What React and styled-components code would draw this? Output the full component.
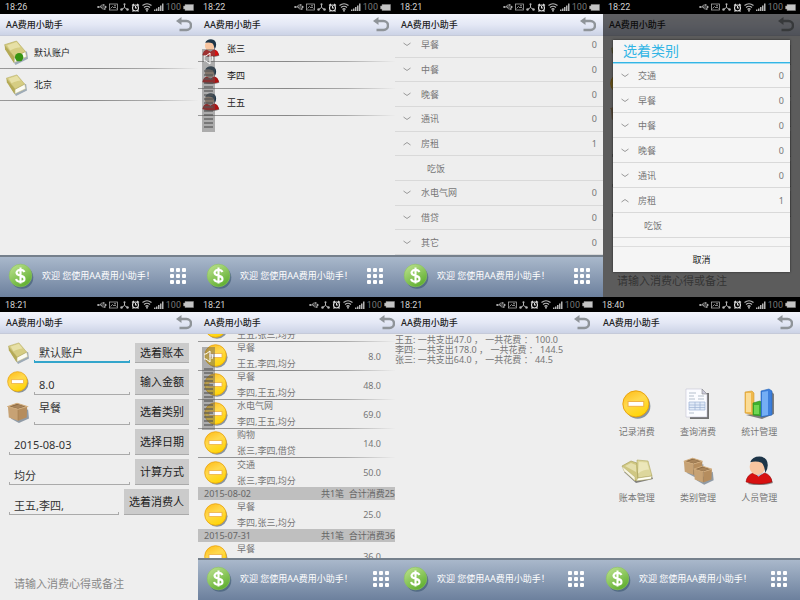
import React from "react";
import styled, { createGlobalStyle, css } from "styled-components";

const Global = createGlobalStyle`
  * { box-sizing: border-box; }
  body { margin: 0; background: #eee; font-family: "Noto Sans", "Noto Sans CJK SC", sans-serif; font-size: 9px; color: #777; }
  button, input { font: inherit; color: inherit; border: 0; margin: 0; padding: 0; background: none; border-radius: 0; }
  button { cursor: pointer; }
  ul { list-style: none; margin: 0; padding: 0; }
  h1, h2, p { margin: 0; font: inherit; }
  svg { display: block; flex: none; }
`;

/* ---------- page ---------- */
const Gallery = styled.main`
  display: grid;
  grid-template-rows: 297fr 303fr;
  height: 100vh;
  min-height: 600px;
`;
const GalleryRow = styled.div`
  display: grid;
  grid-template-columns: ${(p) => p.$columns};
  min-height: 0;
`;
const Phone = styled.section`
  display: flex;
  flex-direction: column;
  min-width: 0;
  min-height: 0;
  overflow: hidden;
  background: #eee;
`;
const Screen = styled.div`
  position: relative;
  display: flex;
  flex-direction: column;
  flex: 1;
  min-height: 0;
`;
const Body = styled.div`
  display: flex;
  flex-direction: column;
  flex: 1;
  min-height: 0;
  overflow: hidden;
`;

/* ---------- bars ---------- */
const StatusRow = styled.div`
  display: flex;
  align-items: center;
  flex: none;
  height: ${(p) => (p.$tall ? 15 : 14)}px;
  padding: 0 ${(p) => p.$right}px 0 5px;
  background: #000;
  color: #d0d0d0;
  font-family: Roboto, sans-serif;
  font-size: 9px;
  line-height: 14px;
`;
const StatusIcons = styled.div`
  display: flex;
  align-items: center;
  gap: 2px;
  margin-left: auto;
  color: #b4b4b4;
`;
const Charge = styled.span`
  color: #777;
  font-size: 9px;
`;
const TitleRow = styled.header`
  display: flex;
  align-items: center;
  justify-content: space-between;
  flex: none;
  height: 22px;
  padding: 0 ${(p) => p.$right}px 0 6px;
  border-bottom: 1px solid #c5cad9;
  background: linear-gradient(#f3f5fc, #e4e8f5 50%, #ccd3e6);
  color: #222;
  font-weight: 500;
`;
const BackButton = styled.button`
  color: #8f9499;
`;
const FooterRow = styled.footer`
  display: flex;
  align-items: center;
  flex: none;
  height: 42px;
  padding: 0 ${(p) => p.$right}px 3px 8px;
  border-top: 2px solid #75808c;
  background: linear-gradient(#a9b8cb, #6c809d);
  color: #fff;
`;
const Welcome = styled.p`
  flex: 1;
  padding-left: 8px;
  white-space: nowrap;
`;

/* ---------- simple lists ---------- */
const fade = css`
  border-bottom: 1px solid;
  border-image: linear-gradient(90deg, #999, #888 45%, #aaa 75%, #eee) 1;
`;
const PlainList = styled.ul`
  margin-top: ${(p) => (p.$scrolled ? -1 : 1)}px;
`;
const PlainItem = styled.li`
  display: flex;
  align-items: center;
  gap: ${(p) => (p.$small ? 7 : 6)}px;
  height: ${(p) => (p.$small ? 27 : 32)}px;
  padding-left: ${(p) => (p.$small ? 4 : 3)}px;
  color: #222;
  ${fade}
`;
const IconSlot = styled.span`
  display: flex;
  align-items: center;
  justify-content: center;
  width: ${(p) => p.$size}px;
  height: ${(p) => p.$size}px;
`;

/* ---------- categories ---------- */
const CategoryList = styled.ul`
  display: flex;
  flex-direction: column;
  flex: 1;
  min-height: 0;
  margin-top: ${(p) => (p.$scrolled ? -3 : 0)}px;
`;
const CategoryItem = styled.li`
  display: flex;
  flex: 1;
  border-bottom: 1px solid #d9d9d9;
`;
const CategoryButton = styled.button`
  display: flex;
  align-items: center;
  flex: 1;
  padding: 0 6px 0 ${(p) => (p.$child ? (p.$dialog ? 31 : 32) : 8)}px;
  text-align: left;
`;
const CategoryName = styled.span`
  flex: 1;
  padding-left: ${(p) => (p.$child ? 0 : p.$dialog ? 9 : 10)}px;
`;

/* ---------- dialog ---------- */
const Scrim = styled.div`
  position: absolute;
  inset: 0;
  display: flex;
  padding: 26px 10px 25px;
  background: rgba(0, 0, 0, 0.61);
`;
const Dialog = styled.div`
  display: flex;
  flex-direction: column;
  flex: 1;
  background: #f5f5f5;
  box-shadow: 0 0 2px #222;
`;
const DialogTitle = styled.h2`
  padding-left: 10px;
  border-bottom: 1px solid #33b5e5;
  box-shadow: 0 1px 0 #9fdcf2;
  color: #33b5e5;
  font-size: 14px;
  line-height: 22px;
`;
const DialogButton = styled.button`
  height: 26px;
  margin-top: 8px;
  border-top: 1px solid #ddd;
  color: #222;
`;

/* ---------- expense form ---------- */
const Form = styled.form`
  display: flex;
  flex-direction: column;
  gap: 4px;
  flex: 1;
  padding: 9px 9px 7px 7px;
  color: #333;
  font-size: 11px;
`;
const FormRow = styled.div`
  display: flex;
  gap: 5px;
  height: ${(p) => (p.$first ? 20 : 26)}px;
  margin-bottom: ${(p) => (p.$first ? 2 : 0)}px;
  svg { align-self: center; }
`;
const fieldPadding = { top: "0 5px 2px", raised: "0 5px 10px", low: "5px 5px 0" };
const Field = styled.input`
  flex: 1;
  min-width: 0;
  margin-left: ${(p) => (p.$wide ? 2 : 0)}px;
  padding: ${(p) => fieldPadding[p.$place]};
  outline: 0;
  --line: ${(p) => (p.$active ? "#33a5cb" : "#aaa")};
  background:
    linear-gradient(var(--line), var(--line)) bottom / 100% ${(p) => (p.$active ? 2 : 1)}px no-repeat,
    linear-gradient(var(--line), var(--line)) left bottom / 1px 3px no-repeat,
    linear-gradient(var(--line), var(--line)) right bottom / 1px 3px no-repeat;
`;
const PickButton = styled.button`
  padding: 0 5px;
  border-bottom: 1px solid #aaa;
  background: #cbcbcb;
  color: #222;
  line-height: 18px;
  white-space: nowrap;
`;
const Note = styled.input`
  margin-top: auto;
  padding-left: 7px;
  line-height: 18px;
  &::placeholder { color: #888; opacity: 1; }
`;

/* ---------- expense records ---------- */
const Records = styled.ul`
  margin-top: -21px;
`;
const Record = styled.li`
  display: flex;
  align-items: center;
  height: 29px;
  padding: 0 14px 0 6px;
  ${(p) => !p.$last && fade}
`;
const RecordText = styled.div`
  display: flex;
  flex-direction: column;
  flex: 1;
  gap: 4px;
  padding-left: 9px;
  line-height: 12px;
  white-space: nowrap;
`;
const DayBand = styled.li`
  display: flex;
  justify-content: space-between;
  height: 13px;
  padding-left: 6px;
  background: #bfbfbf;
  color: #666;
  line-height: 13px;
  white-space: pre;
`;

/* ---------- summary and home ---------- */
const Summary = styled.p`
  padding-top: 1px;
  line-height: 10px;
  white-space: pre;
`;
const HomeGrid = styled.nav`
  display: grid;
  grid-template-columns: repeat(3, 1fr);
  row-gap: 14px;
  padding: 54px 10px 0 9px;
`;
const HomeButton = styled.button`
  display: flex;
  flex-direction: column;
  align-items: center;
  gap: 3px;
  line-height: 17px;
`;

/* ---------- volume indicator ---------- */
const VolumeBox = styled.div`
  position: absolute;
  left: 4px;
  top: 35px;
  padding: 3px 2px;
  background: rgba(90, 90, 90, 0.45);
`;

/* ---------- drawings ---------- */
const Usb = () => (
  <svg width="10" height="8" viewBox="0 0 20 16" fill="none" stroke="currentColor" strokeWidth="1.6">
    <path d="M3 8h14M6 8l3-4h3M8 8l3 4h3" />
    <path d="M16 5l4 3-4 3z" fill="currentColor" stroke="none" />
    <circle cx="2.5" cy="8" r="2.2" fill="currentColor" stroke="none" />
    <path d="M12 2.5h3v3h-3zM14 10.5h3v3h-3z" fill="currentColor" stroke="none" />
  </svg>
);
const Pic = () => (
  <svg width="9" height="8" viewBox="0 0 18 16" fill="none" stroke="currentColor" strokeWidth="1.5">
    <rect x="1" y="2" width="16" height="12" />
    <path d="M3 11l4-4 3 3 2-2 3 3" />
    <circle cx="12" cy="5.5" r="1" />
  </svg>
);
const Net = () => (
  <svg width="9" height="8" viewBox="0 0 18 16" fill="none" stroke="currentColor" strokeWidth="2">
    <path d="M9 2v7l-6 4M9 9l6 4" />
    <circle cx="9" cy="2.5" r="2" fill="currentColor" stroke="none" />
    <circle cx="3" cy="13" r="2.5" fill="currentColor" stroke="none" />
    <circle cx="15" cy="13" r="2.5" fill="currentColor" stroke="none" />
  </svg>
);
const Alarm = () => (
  <svg width="9" height="9" viewBox="0 0 16 18" fill="none" stroke="#ddd" strokeWidth="2.2">
    <circle cx="8" cy="10" r="6" />
    <path d="M8 6v4h3M1 5l4-3M15 5l-4-3M4 15l-2 2M12 15l2 2" />
  </svg>
);
const Wifi = () => (
  <svg width="10" height="9" viewBox="0 0 20 18" fill="none" stroke="currentColor" strokeWidth="2.4">
    <path d="M1 5q9-7 18 0M4 9q6-5 12 0M7 13q3-3 6 0" />
    <circle cx="10" cy="15.5" r="1.8" fill="currentColor" stroke="none" />
  </svg>
);
const Signal = () => (
  <svg width="10" height="8" viewBox="0 0 20 16" fill="currentColor">
    <path d="M0 13h3v3H0zM4 11h3v5H4zM8 8h3v8H8zM12 5h3v11h-3zM16 1h3v15h-3z" />
  </svg>
);
const Battery = () => (
  <svg width="11" height="7" viewBox="0 0 22 14">
    <path d="M4 1h17v12H4v-3H1V4h3z" fill="#c4c4c4" stroke="#888" />
  </svg>
);
const BackArrow = () => (
  <svg width="16" height="15" viewBox="0 0 32 30" aria-hidden="true">
    <path d="M6 8h15a8 8 0 0 1 0 18H7" fill="none" stroke="currentColor" strokeWidth="5" />
    <path d="M0 8l11-8v16z" fill="currentColor" />
  </svg>
);
const Dots = () => (
  <svg width="16" height="16" viewBox="0 0 16 16" fill="#fff" aria-hidden="true">
    {[0, 6, 12].map((y) => [0, 6, 12].map((x) => <rect key={x + "-" + y} x={x} y={y} width="4" height="4" rx="1" />))}
  </svg>
);
const Dollar = () => (
  <svg width="26" height="26" viewBox="0 0 26 26" aria-hidden="true">
    <defs>
      <linearGradient id="green" x1="0" y1="0" x2="0.6" y2="1">
        <stop offset="0" stopColor="#c2e594" />
        <stop offset="1" stopColor="#62b032" />
      </linearGradient>
    </defs>
    <circle cx="14" cy="14.5" r="11.3" fill="#2c4a62" opacity=".5" />
    <circle cx="12.5" cy="12.5" r="11.3" fill="url(#green)" stroke="#8cc45c" strokeWidth=".6" />
    <path d="M16.5 9q-1-2.300-4-2.300t-4 2.700q0 2.400 4 3.200t4 3.300q0 2.700-4 2.700t-4.300-2.800M12.500 4.500v16" fill="none" stroke="#fff" strokeWidth="2.1" />
  </svg>
);
const Minus = ({ size = 24 }) => (
  <svg width={size} height={size} viewBox="0 0 24 24" aria-hidden="true">
    <defs>
      <linearGradient id="gold" x1="0" y1="0" x2="0.5" y2="1">
        <stop offset="0" stopColor="#ffb912" />
        <stop offset=".5" stopColor="#ffd94e" />
        <stop offset="1" stopColor="#ffd60a" />
      </linearGradient>
    </defs>
    <circle cx="13" cy="13.3" r="10.5" fill="#44586b" opacity=".6" />
    <circle cx="11.5" cy="11.5" r="10.8" fill="url(#gold)" stroke="#e8a20c" strokeWidth=".8" />
    <rect x="5" y="9.5" width="13" height="4" fill="#fff" stroke="#efb044" strokeWidth=".8" />
  </svg>
);
const Book = ({ size = 22, dot }) => (
  <svg width={size} height={size} viewBox="0 0 24 24" aria-hidden="true">
    <path d="M5 13l7 11 12-6-1-7z" fill="#4d6880" opacity=".5" />
    <path d="M1.500 4.500L2 9l8.500 13 .5-6z" fill="#b5aa55" />
    <path d="M11 16.500l10.500-5.500 1 5L11 21.500z" fill="#fbfbf4" stroke="#c5bc7c" strokeWidth=".5" />
    <path d="M1.500 4.500L13 1l8.500 10L11 16.500z" fill="#d6cd83" stroke="#b5ab5c" strokeWidth=".6" />
    <path d="M4 5l9-3 4 5q-7 1-10 3z" fill="#ece6b2" opacity=".75" />
    {dot && <circle cx="15.500" cy="16.500" r="4" fill="#379512" />}
  </svg>
);
const Books = () => (
  <svg width="32" height="32" viewBox="0 0 32 32" aria-hidden="true">
    <path d="M3 18l12 11 17-4-3-8z" fill="#222" opacity=".55" />
    <path d="M1 12l9-5 6 2 1 16-2 2z" fill="#cfc782" stroke="#a39a52" strokeWidth=".6" />
    <path d="M1 12l13 11v4L3 17z" fill="#f7f5e4" stroke="#b5ac68" strokeWidth=".5" />
    <path d="M16 6l11 1 4 15-14 2z" fill="#ddd79c" stroke="#b0a75e" strokeWidth=".6" />
    <path d="M17 24l14-2-1 3-15 2z" fill="#fffff4" stroke="#b0a75e" strokeWidth=".5" />
    <path d="M18 8l8 .5 2 7q-6 0-11 4z" fill="#ece7ba" />
    <path d="M4 12l6-3 5 2v7z" fill="#e5dfac" />
  </svg>
);
const BoxShape = () => (
  <>
    <path d="M4 19l9 5 11-5-1-10z" fill="#44586b" opacity=".55" />
    <path d="M1 6l11 3v12.500L2 18z" fill="#c7a274" />
    <path d="M12 9l10-3-.5 12-9.500 3.500z" fill="#b58d5e" />
    <path d="M1 6l10-3.500L22 6l-10 3z" fill="#8d6c46" stroke="#d3ae7e" strokeWidth="1.100" />
    <path d="M5 6.200l7-2.200 6.500 2-6.500 2z" fill="#a8845a" />
    <path d="M12 9.500V21" stroke="#9b7549" strokeWidth=".5" />
  </>
);
const Box = () => (
  <svg width="22" height="22" viewBox="0 0 24 24" aria-hidden="true">
    <BoxShape />
  </svg>
);
const Boxes = () => (
  <svg width="32" height="32" viewBox="0 0 32 32" aria-hidden="true">
    <g transform="translate(1 2) scale(.88)"><BoxShape /></g>
    <g transform="translate(11 10) scale(.86)"><BoxShape /></g>
  </svg>
);
const Person = ({ size = 18, dim }) => (
  <svg width={size} height={size} viewBox="0 0 28 28" aria-hidden="true">
    <path d="M3 27q3-9 13-9t11 8q-12 4-24 1z" fill="#222" opacity=".5" />
    <path d="M1 25q1-7 7-8.500l5 3 6-3q6 1.500 7 8.500-12 4-25 0z" fill={dim ? "#b01212" : "#d81010"} stroke="#990909" strokeWidth=".6" />
    <path d="M9 16l4 4 5-4z" fill="#abc3e8" />
    <ellipse cx="12" cy="10.500" rx="7.500" ry="7.800" fill={dim ? "#a48c78" : "#f8c5a0"} />
    <path d="M5 6q2-5.500 9-5.500 8 .5 8 8.500 0 4-2.500 7.500Q19 9 16 6.500 11 4.500 5 6z" fill="#1d3548" />
  </svg>
);
const Doc = () => (
  <svg width="32" height="32" viewBox="0 0 32 32" aria-hidden="true">
    <path d="M7 5h20v26H8z" fill="#222" opacity=".6" />
    <path d="M4 1h16l5 5v23H4z" fill="#fbfcff" stroke="#bbc" strokeWidth=".5" />
    <path d="M20 1v5h5z" fill="#ccd" stroke="#888" strokeWidth=".6" />
    <path d="M7 5h7M7 8h5M16 8h6M7 11h6M16 11h6M7 25h5" stroke="#b5bfce" strokeWidth="1.200" />
    <path d="M7 14h16v8H7zM7 17h16M7 19.500h16M13 14v8M18 14v8" fill="#e2ebf8" stroke="#9db3d4" strokeWidth=".7" />
  </svg>
);
const Chart = () => (
  <svg width="32" height="32" viewBox="0 0 32 32" aria-hidden="true">
    <path d="M3 27l16 4 12-5V6l-3-3v20z" fill="#333" opacity=".6" />
    <path d="M2 4l7-1 2 2v22l-9-2z" fill="#efb84c" stroke="#d49c32" strokeWidth=".6" />
    <path d="M3 5h5v19H3z" fill="#fbdc96" />
    <path d="M10 15l7-2 2 2v13l-9-1z" fill="#3eaf2d" stroke="#278e1c" strokeWidth=".6" />
    <path d="M11 17h5v9h-5z" fill="#6fd653" />
    <path d="M18 3l8-2 3 2v24l-11 2z" fill="#3d7fdc" stroke="#2263b8" strokeWidth=".6" />
    <path d="M19 4l6-1v24l-6 1z" fill="#74aef5" />
  </svg>
);
const Chevron = ({ up }) => (
  <svg width="8" height="5" viewBox="0 0 8 5" fill="none" stroke="#999" aria-hidden="true">
    <path d={up ? "M0.5 4L4 1.5 7.5 4" : "M0.5 1L4 3.5 7.5 1"} />
  </svg>
);
const Volume = () => (
  <VolumeBox>
    <svg width="9" height="77" viewBox="0 0 9 77" aria-hidden="true">
      <path d="M0 4h2l4-3v11L2 9H0z" fill="none" stroke="#fff" />
      <path d="M8 4q1 2 0 5" fill="none" stroke="#fff" />
      {Array.from({ length: 15 }, (_, i) => (
        <rect key={i} x="0" y={18 + i * 4} width="9" height="2" fill="#555" opacity=".6" />
      ))}
    </svg>
  </VolumeBox>
);

/* ---------- shared parts ---------- */
function Status({ time, tall, right = 4, noPicture }) {
  return (
    <StatusRow $tall={tall} $right={right}>
      <span>{time}</span>
      <StatusIcons>
        <Usb />
        {!noPicture && <Pic />}
        <Net />
        <Alarm />
        <Wifi />
        <Signal />
        <Charge>100</Charge>
        <Battery />
      </StatusIcons>
    </StatusRow>
  );
}
function Title({ right = 6 }) {
  return (
    <TitleRow $right={right}>
      <h1>AA费用小助手</h1>
      <BackButton type="button" aria-label="返回"><BackArrow /></BackButton>
    </TitleRow>
  );
}
function Footer({ right = 12 }) {
  return (
    <FooterRow $right={right}>
      <Dollar />
      <Welcome>欢迎 您使用AA费用小助手！</Welcome>
      <button type="button" aria-label="菜单"><Dots /></button>
    </FooterRow>
  );
}
function Categories({ items, scrolled, dialog }) {
  return (
    <CategoryList $scrolled={scrolled}>
      {items.map(([name, count]) => {
        const child = count === undefined;
        return (
          <CategoryItem key={name}>
            <CategoryButton type="button" $child={child} $dialog={dialog}>
              {!child && <Chevron up={count > 0} />}
              <CategoryName $child={child} $dialog={dialog}>{name}</CategoryName>
              {!child && <span>{count}</span>}
            </CategoryButton>
          </CategoryItem>
        );
      })}
    </CategoryList>
  );
}
const fields = [
  { value: "默认账户", action: "选着账本", icon: <Book />, active: true, place: "top" },
  { value: "8.0", action: "输入金额", icon: <Minus size={22} /> },
  { value: "早餐", action: "选着类别", icon: <Box />, place: "raised" },
  { value: "2015-08-03", action: "选择日期" },
  { value: "均分", action: "计算方式" },
  { value: "王五,李四,", action: "选着消费人" },
];
function ExpenseForm({ inert }) {
  return (
    <Form inert={inert} onSubmit={(e) => e.preventDefault()}>
      {fields.map((f) => (
        <FormRow key={f.action} $first={f.active}>
          {f.icon}
          <Field
            aria-label={f.action}
            defaultValue={f.value}
            $active={f.active}
            $place={f.place || "low"}
            $wide={!f.icon}
          />
          <PickButton type="button">{f.action}</PickButton>
        </FormRow>
      ))}
      <Note aria-label="备注" placeholder="请输入消费心得或备注" />
    </Form>
  );
}

const shared = [["早餐", 0], ["中餐", 0], ["晚餐", 0], ["通讯", 0], ["房租", 1], ["吃饭"]];
const records = [
  { name: "早餐", who: "王五,张三,均分", amount: "8.0" },
  { name: "早餐", who: "王五,李四,均分", amount: "8.0" },
  { name: "早餐", who: "李四,王五,均分", amount: "48.0" },
  { name: "水电气网", who: "李四,王五,均分", amount: "69.0" },
  { name: "购物", who: "张三,李四,借贷", amount: "14.0" },
  { name: "交通", who: "张三,李四,均分", amount: "50.0", last: true },
  { day: "2015-08-02", total: "共1笔  合计消费25" },
  { name: "早餐", who: "李四,张三,均分", amount: "25.0", last: true },
  { day: "2015-07-31", total: "共1笔  合计消费36" },
  { name: "早餐", who: "李四,张三,均分", amount: "36.0", last: true },
];
const home = [
  ["记录消费", <Minus size={29} />],
  ["查询消费", <Doc />],
  ["统计管理", <Chart />],
  ["账本管理", <Books />],
  ["类别管理", <Boxes />],
  ["人员管理", <Person size={29} />],
];

export default function App() {
  return (
    <>
      <Global />
      <Gallery>
        <GalleryRow $columns="198fr 197fr 208fr 197fr">
          <Phone>
            <Status time="18:26" />
            <Title />
            <Body>
              <PlainList>
                <PlainItem><IconSlot $size={25}><Book size={25} dot /></IconSlot>默认账户</PlainItem>
                <PlainItem><IconSlot $size={25}><Book size={22} /></IconSlot>北京</PlainItem>
              </PlainList>
            </Body>
            <Footer />
          </Phone>
          <Phone>
            <Status time="18:22" />
            <Screen>
              <Title />
              <Body>
                <PlainList $scrolled>
                  <PlainItem $small><Person />张三</PlainItem>
                  <PlainItem $small><Person dim />李四</PlainItem>
                  <PlainItem $small><Person dim />王五</PlainItem>
                </PlainList>
              </Body>
              <Footer />
              <Volume />
            </Screen>
          </Phone>
          <Phone>
            <Status time="18:21" right={3} />
            <Title right={7} />
            <Body>
              <Categories scrolled items={[...shared, ["水电气网", 0], ["借贷", 0], ["其它", 0]]} />
            </Body>
            <Footer right={13} />
          </Phone>
          <Phone>
            <Status time="18:22" />
            <Screen>
              <Title />
              <Body><ExpenseForm inert /></Body>
              <Scrim>
                <Dialog role="dialog" aria-label="选着类别">
                  <DialogTitle>选着类别</DialogTitle>
                  <Categories dialog items={[["交通", 0], ...shared]} />
                  <DialogButton type="button">取消</DialogButton>
                </Dialog>
              </Scrim>
            </Screen>
          </Phone>
        </GalleryRow>
        <GalleryRow $columns="198fr 197fr 202fr 203fr">
          <Phone>
            <Status time="18:21" tall />
            <Title />
            <Body><ExpenseForm /></Body>
          </Phone>
          <Phone>
            <Status time="18:21" tall right={0} noPicture />
            <Screen>
              <Title right={0} />
              <Body>
                <Records>
                  {records.map((r, i) =>
                    r.day ? (
                      <DayBand key={i}><span>{r.day}</span><span>{r.total}</span></DayBand>
                    ) : (
                      <Record key={i} $last={r.last}>
                        <Minus />
                        <RecordText><span>{r.name}</span><span>{r.who}</span></RecordText>
                        <span>{r.amount}</span>
                      </Record>
                    )
                  )}
                </Records>
              </Body>
              <Footer right={6} />
              <Volume />
            </Screen>
          </Phone>
          <Phone>
            <Status time="18:21" tall />
            <Title right={7} />
            <Body>
              <Summary>{"王五: 一共支出47.0 ， 一共花费 ： 100.0\n李四: 一共支出178.0 ， 一共花费 ： 144.5\n张三: 一共支出64.0 ， 一共花费 ： 44.5"}</Summary>
            </Body>
            <Footer right={13} />
          </Phone>
          <Phone>
            <Status time="18:40" tall />
            <Title right={7} />
            <Body>
              <HomeGrid>
                {home.map(([label, icon]) => (
                  <HomeButton key={label} type="button">
                    <IconSlot $size={32}>{icon}</IconSlot>
                    {label}
                  </HomeButton>
                ))}
              </HomeGrid>
            </Body>
            <Footer right={13} />
          </Phone>
        </GalleryRow>
      </Gallery>
    </>
  );
}
